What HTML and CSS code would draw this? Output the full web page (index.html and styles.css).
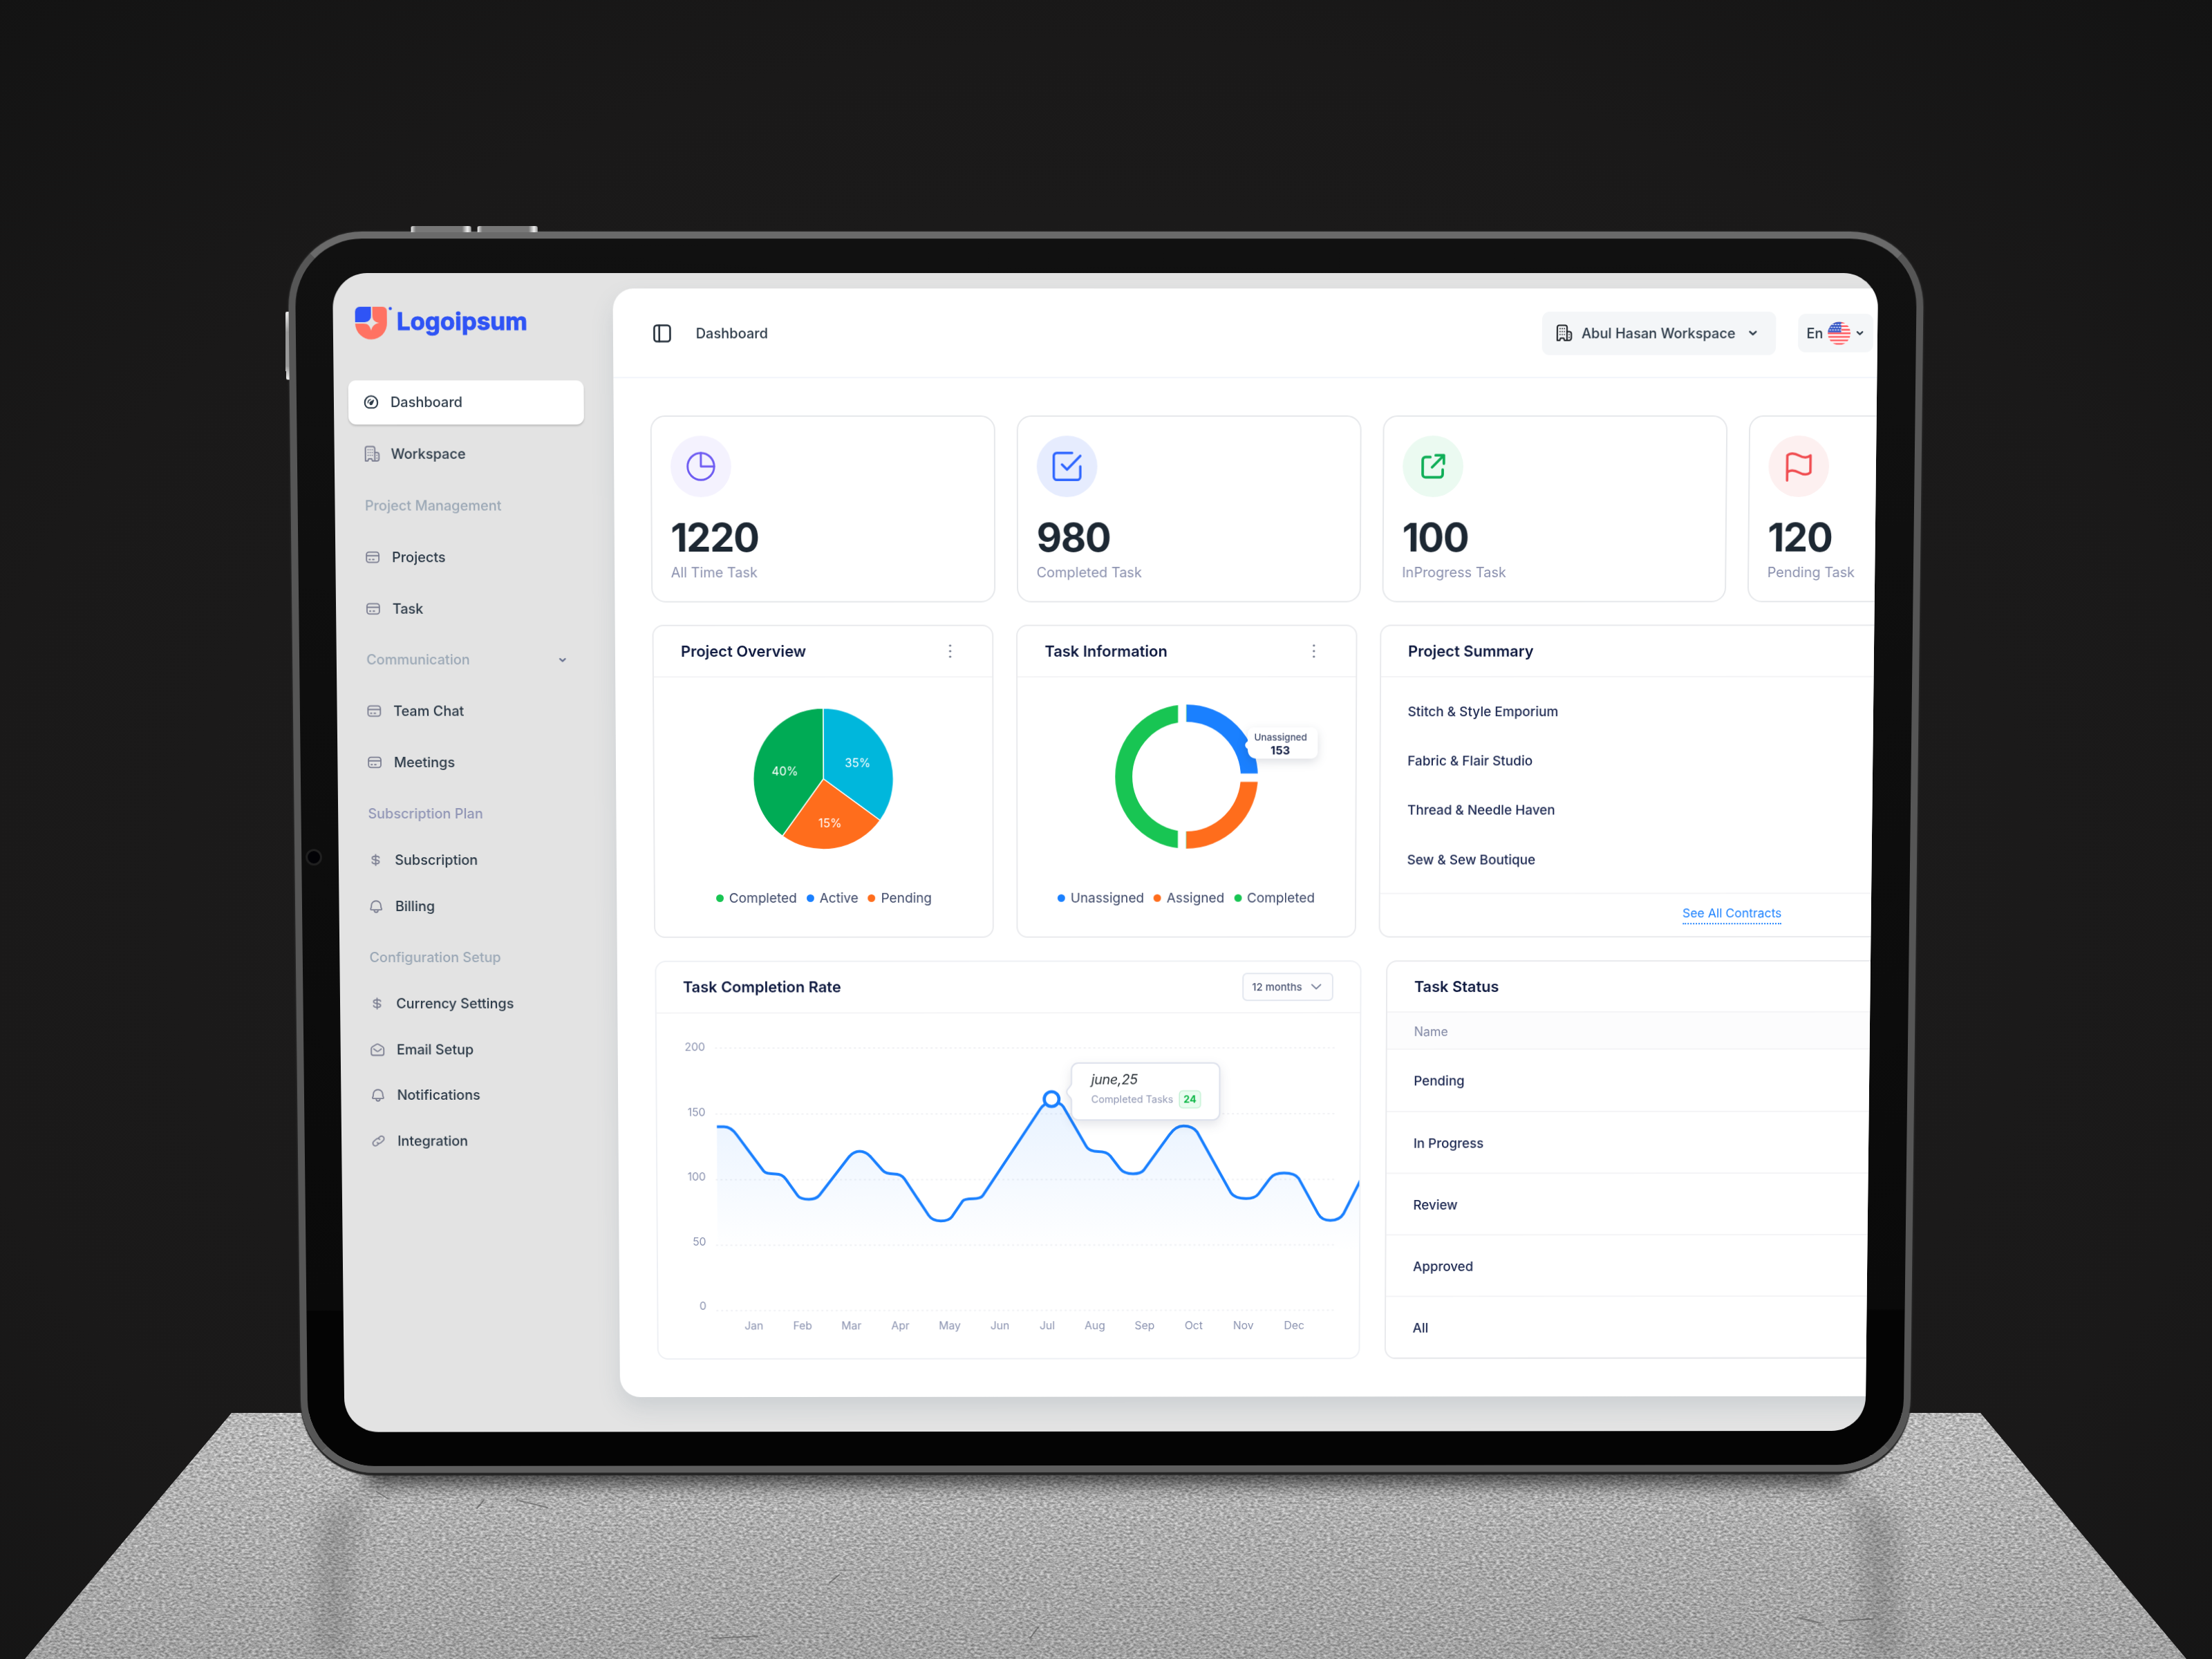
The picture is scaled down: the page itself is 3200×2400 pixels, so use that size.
FILE: index.html
```html
<!DOCTYPE html>
<html lang="en">

<head>
    <meta charset="UTF-8">
    <meta name="viewport" content="width=device-width, initial-scale=1.0">
    <title>Dashboard</title>
    <link rel="stylesheet" href="styles.css">
</head>

<body>
    <!-- icon set -->
    <svg class="icon-set" width="0" height="0">
        <symbol id="i-gauge" viewBox="0 0 24 24">
            <path d="M8 21h8c3.600-.7 6-4.300 6-8.500a10 10 0 0 0-20 0C2 16.700 4.400 20.300 8 21z" stroke-width="2.300" />
            <path d="M16 9l-2.300 5.500a2 2 0 1 1-2.600-2.600z" fill="currentColor" stroke-width="1.600" />
            <path d="M7 13a5 5 0 0 1 4-5" stroke-width="1.600" />
        </symbol>
        <symbol id="i-building" viewBox="0 0 24 24">
            <path d="M15.500 22H18.500a3 3 0 0 0 3-3v-6a3 3 0 0 0-3-3h-3" />
            <path d="M15.500 22V4a2.500 2.500 0 0 0-2.500-2.500H4.500A2.500 2.500 0 0 0 2 4v18h3.500l1-3h4.500l1 3z" />
            <path d="M5.800 6h0M8.800 6h0M11.800 6h0M5.800 10h0M8.800 10h0M11.800 10h0M5.800 14h0M8.800 14h0M11.800 14h0M18.500 14h0M18.500 18h0" stroke-width="1.800" />
        </symbol>
        <symbol id="i-card" viewBox="0 0 24 24">
            <rect x="2.200" y="4" width="19.600" height="16" rx="4" />
            <path d="M2.500 9.500h19M6.500 15.500h1.500M12 15.500h2" />
        </symbol>
        <symbol id="i-dollar" viewBox="0 0 24 24">
            <path d="M12 3.500v17M17.500 8.500C17.500 6.800 15 6 12 6S6.500 6.900 6.500 9s2.300 2.700 5.500 3 5.500 1 5.500 3-2.300 3-5.500 3-5.500-1-5.500-2.700" />
        </symbol>
        <symbol id="i-bell" viewBox="0 0 24 24">
            <path d="M4.500 17.500C3 17.500 3 16.500 3.500 15.500 4.500 14 4.500 13 4.500 11a7.500 7.500 0 0 1 15 0c0 2 0 3 1 4.500.5 1 .5 2-1 2z" />
            <path d="M9 18.500a3 3 0 0 0 6 0" />
        </symbol>
        <symbol id="i-mail" viewBox="0 0 24 24">
            <path d="M2 10.500C2 9 3 8 4 7.300L10.500 3.500a3 3 0 0 1 3 0L20 7.300c1 .7 2 1.700 2 3.200V18a3 3 0 0 1-3 3H5a3 3 0 0 1-3-3z" />
            <path d="M6 11l4.500 3.300a2.500 2.500 0 0 0 3 0L18 11" />
        </symbol>
        <symbol id="i-link" viewBox="0 0 24 24">
            <path d="M10 14.500a4 4 0 0 0 5.600.4l4-3.600a4 4 0 0 0-5.300-6l-2.500 2.200" />
            <path d="M14 9.500a4 4 0 0 0-5.600-.4l-4 3.600a4 4 0 0 0 5.300 6l2.500-2.200" />
        </symbol>
        <symbol id="i-chevron" viewBox="0 0 24 24">
            <path d="M5 9l7 6.500L19 9" />
        </symbol>
    </svg>

    <div class="scene">
        <svg class="backdrop" viewBox="0 0 3200 2400">
            <defs>
                <radialGradient id="wall" cx="0.5" cy="0.55" r="0.75">
                    <stop offset="0" stop-color="#1f1e1e" />
                    <stop offset="0.7" stop-color="#1a1919" />
                    <stop offset="1" stop-color="#131313" />
                </radialGradient>
                <filter id="grain" x="0" y="0" width="1" height="1" color-interpolation-filters="sRGB">
                    <feTurbulence type="fractalNoise" baseFrequency="0.2 0.34" numOctaves="2" seed="7" />
                    <feColorMatrix values="0.6 0 0 0 0.425  0.6 0 0 0 0.425  0.6 0 0 0 0.425  0 0 0 0 1" />
                </filter>
                <filter id="soft" x="-20%" y="-200%" width="140%" height="500%">
                    <feGaussianBlur stdDeviation="13" />
                </filter>
                <filter id="softer" x="-200%" y="-20%" width="500%" height="140%">
                    <feGaussianBlur stdDeviation="20" />
                </filter>
                <linearGradient id="falloff" x1="0" y1="0" x2="0" y2="1">
                    <stop offset="0" stop-color="#000" stop-opacity="0" />
                    <stop offset="1" stop-color="#000" stop-opacity="0.13" />
                </linearGradient>
                <clipPath id="slab">
                    <path d="M335 2044H2865L3163 2400H36z" />
                </clipPath>
            </defs>
            <rect width="3200" height="2400" fill="url(#wall)" />
            <g clip-path="url(#slab)">
                <rect y="2040" width="3200" height="360" filter="url(#grain)" />
                <rect y="2040" width="3200" height="360" fill="url(#falloff)" />
                <rect x="530" y="2105" width="2140" height="42" fill="#000" opacity="0.65" filter="url(#soft)" />
                <path d="M530 2150L470 2200V2400H490L500 2220z" fill="#444" opacity="0.38" filter="url(#softer)" />
                <path d="M2670 2150L2735 2200V2400H2710L2700 2220z" fill="#444" opacity="0.38" filter="url(#softer)" />
                <path d="M748 2170l44 11M690 2182l10-12M545 2158l16 10M1200 2290l14-12M1490 2370l12-16M2660 2345l50-3M2600 2340l34 8M1030 2370l66-3" stroke="#555" stroke-width="2" fill="none" opacity="0.6" />
            </g>
        </svg>

        <div class="tablet">
            <span class="side-key key-1"></span>
            <span class="side-key key-2"></span>
            <span class="side-key key-3"></span>
            <span class="camera"></span>

            <div class="screen">
                <aside class="sidebar">
                    <svg class="logo" width="240" height="60" viewBox="0 0 240 60">
                        <path d="M0 9a7 7 0 0 1 7-7h16v12a9 9 0 0 1-9 10H0z" fill="#2f54f5" />
                        <path d="M25 2h15a6 6 0 0 1 6 6v17a23 23 0 0 1-46 1h12c7 0 9 3 11 10 2-7 5-9.500 12-11-7-1.500-10-4-10-11z" fill="#ff7262" />
                        <circle cx="51" cy="4.500" r="2.300" fill="#2f54f5" />
                        <text x="60" y="35" textLength="189" lengthAdjust="spacingAndGlyphs">Logoipsum</text>
                    </svg>

                    <nav class="nav">
                        <a class="nav-item active"><svg><use href="#i-gauge" /></svg>Dashboard</a>
                        <a class="nav-item"><svg class="big"><use href="#i-building" /></svg>Workspace</a>
                        <div class="nav-title">Project Management</div>
                        <a class="nav-item"><svg><use href="#i-card" /></svg>Projects</a>
                        <a class="nav-item"><svg><use href="#i-card" /></svg>Task</a>
                        <div class="nav-title">Communication<svg class="arrow"><use href="#i-chevron" /></svg></div>
                        <a class="nav-item"><svg><use href="#i-card" /></svg>Team Chat</a>
                        <a class="nav-item"><svg><use href="#i-card" /></svg>Meetings</a>
                        <div class="nav-group">
                            <div class="nav-title violet">Subscription Plan</div>
                            <a class="nav-item"><svg><use href="#i-dollar" /></svg>Subscription</a>
                            <a class="nav-item"><svg><use href="#i-bell" /></svg>Billing</a>
                        </div>
                        <div class="nav-group">
                            <div class="nav-title">Configuration Setup</div>
                            <a class="nav-item"><svg><use href="#i-dollar" /></svg>Currency Settings</a>
                            <a class="nav-item"><svg><use href="#i-mail" /></svg>Email Setup</a>
                            <a class="nav-item"><svg><use href="#i-bell" /></svg>Notifications</a>
                            <a class="nav-item"><svg><use href="#i-link" /></svg>Integration</a>
                        </div>
                    </nav>
                </aside>

                <main class="main">
                    <header class="topbar">
                        <svg class="toggle" viewBox="0 0 26 26">
                            <rect x="1.500" y="1.500" width="23" height="23" rx="4" />
                            <path d="M8.800 1.500v23" />
                        </svg>
                        <span class="page-name">Dashboard</span>
                        <button class="workspace">
                            <svg class="ws-icon"><use href="#i-building" /></svg>
                            <span>Abul Hasan Workspace</span>
                            <svg class="arrow"><use href="#i-chevron" /></svg>
                        </button>
                        <button class="lang">
                            <span>En</span>
                            <svg class="flag" viewBox="0 0 34 34">
                                <clipPath id="round"><circle cx="17" cy="17" r="17" /></clipPath>
                                <g clip-path="url(#round)">
                                    <rect width="34" height="34" fill="#fff" />
                                    <path d="M0 1.300h34M0 6.500h34M0 11.700h34M0 16.900h34M0 22.100h34M0 27.300h34M0 32.500h34" stroke="#ff5a5f" stroke-width="2.700" />
                                    <rect width="20" height="15.500" fill="#3a5bc7" />
                                    <path d="M3 4h17M1 8h19M3 12h17" stroke="#fff" stroke-width="1.300" stroke-dasharray="1.500 2.500" />
                                </g>
                            </svg>
                            <svg class="arrow"><use href="#i-chevron" /></svg>
                        </button>
                    </header>

                    <div class="content">
                        <section class="stats">
                            <div class="stat">
                                <div class="stat-icon purple">
                                    <svg viewBox="0 0 24 24"><circle cx="12" cy="12" r="10.500" /><path d="M12 1.500V12h10.500" /></svg>
                                </div>
                                <div class="stat-value">1220</div>
                                <div class="stat-label">All Time Task</div>
                            </div>
                            <div class="stat">
                                <div class="stat-icon blue">
                                    <svg viewBox="0 0 24 24"><path d="M16 1.500H4A2.500 2.500 0 0 0 1.500 4v16A2.500 2.500 0 0 0 4 22.500h16a2.500 2.500 0 0 0 2.500-2.500v-8" /><path d="M8 10.500l4 4L22.500 3.800" /></svg>
                                </div>
                                <div class="stat-value">980</div>
                                <div class="stat-label">Completed Task</div>
                            </div>
                            <div class="stat">
                                <div class="stat-icon green">
                                    <svg viewBox="0 0 24 24"><path d="M10 4.500H6A2.500 2.500 0 0 0 3.500 7v12A2.500 2.500 0 0 0 6 21.500h12a2.500 2.500 0 0 0 2.500-2.500v-4" /><path d="M14.500 3H21.500V10M21.500 3L11.500 13" /></svg>
                                </div>
                                <div class="stat-value">100</div>
                                <div class="stat-label">InProgress Task</div>
                            </div>
                            <div class="stat">
                                <div class="stat-icon red">
                                    <svg viewBox="0 0 24 24"><path d="M2.800 23V3.500c3-2.600 6-1.700 9.200 0s6.200 2.500 9.200 0v13.300c-3 2.600-6 1.700-9.200 0s-6.200-2.600-9.200 0" /></svg>
                                </div>
                                <div class="stat-value">120</div>
                                <div class="stat-label">Pending Task</div>
                            </div>
                        </section>

                        <section class="row-middle">
                            <div class="card overview">
                                <div class="card-head"><h3>Project Overview</h3><svg class="dots" viewBox="0 0 6 20"><path d="M3 2h0M3 10h0M3 18h0" /></svg></div>
                                <svg class="round-chart" viewBox="-110 -110 220 220">
                                    <g stroke="#fff" stroke-width="1.500" stroke-linejoin="round">
                                        <path d="M0 0V-102A102 102 0 0 1 82.500 60z" fill="#00b7dc" />
                                        <path d="M0 0L82.500 60A102 102 0 0 1-60 82.500z" fill="#ff6d1c" />
                                        <path d="M0 0L-60 82.500A102 102 0 0 1 0-102z" fill="#00ab55" />
                                    </g>
                                    <g class="pie-label">
                                        <text x="50" y="-17">35%</text>
                                        <text x="9.500" y="70">15%</text>
                                        <text x="-56" y="-5">40%</text>
                                    </g>
                                </svg>
                                <div class="legend">
                                    <span><i class="c-green"></i>Completed</span>
                                    <span><i class="c-blue"></i>Active</span>
                                    <span><i class="c-orange"></i>Pending</span>
                                </div>
                            </div>

                            <div class="card information">
                                <div class="card-head"><h3>Task Information</h3><svg class="dots" viewBox="0 0 6 20"><path d="M3 2h0M3 10h0M3 18h0" /></svg></div>
                                <svg class="round-chart" viewBox="-110 -107 220 220">
                                    <g fill="none" stroke-width="25" stroke-linecap="butt">
                                        <path d="M0-91.500A91.500 91.500 0 0 1 91.500 0" stroke="#1a80ff" />
                                        <path d="M91.500 0A91.500 91.500 0 0 1 0 91.500" stroke="#ff6d1c" />
                                        <path d="M0 91.500A91.500 91.500 0 0 1 0-91.500" stroke="#18c553" />
                                    </g>
                                    <path d="M-12.500-108h12v216h-12zM0-4.500h108v12H0z" fill="#fff" />
                                    <path class="callout" d="M97.500-71H182a9 9 0 0 1 9 9v27a9 9 0 0 1-9 9H103c-10 0-14-6-14-14-5-3-5-8 0-11v-11a9 9 0 0 1 8.500-9z" />
                                    <g class="callout-text">
                                        <text x="137" y="-52.500">Unassigned</text>
                                        <text class="strong" x="136.500" y="-32.500">153</text>
                                    </g>
                                </svg>
                                <div class="legend">
                                    <span><i class="c-blue"></i>Unassigned</span>
                                    <span><i class="c-orange"></i>Assigned</span>
                                    <span><i class="c-green"></i>Completed</span>
                                </div>
                            </div>

                            <div class="card summary">
                                <div class="card-head"><h3>Project Summary</h3></div>
                                <ul>
                                    <li>Stitch &amp; Style Emporium</li>
                                    <li>Fabric &amp; Flair Studio</li>
                                    <li>Thread &amp; Needle Haven</li>
                                    <li>Sew &amp; Sew Boutique</li>
                                </ul>
                                <div class="card-foot"><a>See All Contracts</a></div>
                            </div>
                        </section>

                        <section class="row-bottom">
                            <div class="card rate">
                                <div class="card-head">
                                    <h3>Task Completion Rate</h3>
                                    <button class="period">12 months<svg><use href="#i-chevron" /></svg></button>
                                </div>
                                <svg class="line-chart" viewBox="0.3 1.5 1030 505">
                                    <defs>
                                        <linearGradient id="area" gradientUnits="userSpaceOnUse" x1="0" y1="125" x2="0" y2="350">
                                            <stop offset="0" stop-color="#1a80ff" stop-opacity="0.1" />
                                            <stop offset="1" stop-color="#1a80ff" stop-opacity="0" />
                                        </linearGradient>
                                    </defs>
                                    <path class="grid-line" d="M85.500 51.600H992M85.500 147.400H992M85.500 243.200H992M85.500 339H992M85.500 434.800H992" />
                                    <g class="y-axis">
                                        <text x="71" y="56">200</text>
                                        <text x="71" y="150.500">150</text>
                                        <text x="71" y="245">100</text>
                                        <text x="71" y="339.500">50</text>
                                        <text x="71" y="434">0</text>
                                    </g>
                                    <g class="x-axis">
                                        <text x="140.500" y="463">Jan</text>
                                        <text x="212" y="463">Feb</text>
                                        <text x="283.500" y="463">Mar</text>
                                        <text x="355.500" y="463">Apr</text>
                                        <text x="428" y="463">May</text>
                                        <text x="501.500" y="463">Jun</text>
                                        <text x="571" y="463">Jul</text>
                                        <text x="641" y="463">Aug</text>
                                        <text x="714" y="463">Sep</text>
                                        <text x="786" y="463">Oct</text>
                                        <text x="859" y="463">Nov</text>
                                        <text x="933.500" y="463">Dec</text>
                                    </g>
                                    <path fill="url(#area)" d="M87.600 166.100H98Q108 166.100 116.800 178.100L155.800 230.800Q159 234.900 173.600 234.900Q182.800 234.900 187.800 241.900L205.500 266.700Q209.300 272 221.800 272Q232.700 272 237.500 265.800L280 211Q287 202 296.400 202Q306 202 313.400 211L329.800 229.600Q334.500 234.900 346.100 234.900Q357 234.900 361.700 241.900L397.200 295.500Q402.600 303.700 415 303.700Q427 303.700 431.300 297.600L446.900 274.900Q449.400 271.200 462.500 271.200Q473.700 271.200 476.700 266.700L560.500 141Q567.400 130.700 577.500 130.700Q591 130.700 594.600 136.900L628 194.600Q632.500 202.400 645.700 202.400Q658.400 202.400 663.500 209L677.700 227.500Q683.400 234.900 696.800 234.900Q708 234.900 712.500 229.600L750 178.100Q759 165.300 770.500 165.300Q784 165.300 790.500 174L840 262.500Q845.500 271.200 862.500 271.200Q875.500 271.200 880.500 264.600L897.500 241.900Q903 234.100 918 234.100Q934 234.100 939.500 241.900L968 293.400Q973.500 303.300 986 303.300Q999.500 303.300 1005.500 293.400L1036 233V400H87.600z" />
                                    <path class="line" d="M87.600 166.100H98Q108 166.100 116.800 178.100L155.800 230.800Q159 234.900 173.600 234.900Q182.800 234.900 187.800 241.900L205.500 266.700Q209.300 272 221.800 272Q232.700 272 237.500 265.800L280 211Q287 202 296.400 202Q306 202 313.400 211L329.800 229.600Q334.500 234.900 346.100 234.900Q357 234.900 361.700 241.900L397.200 295.500Q402.600 303.700 415 303.700Q427 303.700 431.300 297.600L446.900 274.900Q449.400 271.200 462.500 271.200Q473.700 271.200 476.700 266.700L560.500 141Q567.400 130.700 577.500 130.700Q591 130.700 594.600 136.900L628 194.600Q632.500 202.400 645.700 202.400Q658.400 202.400 663.500 209L677.700 227.500Q683.400 234.900 696.800 234.900Q708 234.900 712.500 229.600L750 178.100Q759 165.300 770.500 165.300Q784 165.300 790.500 174L840 262.500Q845.500 271.200 862.500 271.200Q875.500 271.200 880.500 264.600L897.500 241.900Q903 234.100 918 234.100Q934 234.100 939.500 241.900L968 293.400Q973.500 303.300 986 303.300Q999.500 303.300 1005.500 293.400L1036 233" />
                                    <circle cx="577.500" cy="126" r="10.800" fill="#fff" stroke="#1a80ff" stroke-width="4.600" />
                                    <path class="tip" d="M616.600 73.500H813.500a10 10 0 0 1 10 10v63a10 10 0 0 1-10 10H616.600a10 10 0 0 1-10-10V128c0-5-7-7-7-12.500s7-7.500 7-12.500V83.500a10 10 0 0 1 10-10z" />
                                    <text class="tip-date" x="635.500" y="104.500">june,25</text>
                                    <text class="tip-label" x="635.500" y="132">Completed Tasks</text>
                                    <rect class="tip-badge" x="764.500" y="114" width="31" height="25" rx="5" />
                                    <text class="tip-count" x="780" y="132">24</text>
                                </svg>
                            </div>

                            <div class="card status">
                                <div class="card-head"><h3>Task Status</h3></div>
                                <div class="table-head">Name</div>
                                <div class="table-row">Pending</div>
                                <div class="table-row">In Progress</div>
                                <div class="table-row">Review</div>
                                <div class="table-row">Approved</div>
                                <div class="table-row">All</div>
                            </div>
                        </section>
                    </div>
                </main>
            </div>
        </div>
    </div>
</body>

</html>
```
FILE: styles.css
```css
* {
    box-sizing: border-box;
}

body {
    margin: 0;
    width: 3200px;
    height: 2400px;
    overflow: hidden;
    background: #1a1919;
    font-family: Inter, "Liberation Sans", sans-serif;
    font-size: 20px;
    color: #2b3947;
}

.icon-set {
    position: absolute;
}

svg {
    flex: none;
    overflow: visible;
    fill: none;
    stroke-linecap: round;
    stroke-linejoin: round;
}

text {
    stroke: none;
}

button {
    font: inherit;
    color: inherit;
    border: none;
}

h3 {
    margin: 0;
    font-size: 22px;
    font-weight: 600;
    color: #0f1a40;
}

.scene {
    position: relative;
    width: 3200px;
    height: 2400px;
    overflow: hidden;
}

.backdrop {
    position: absolute;
    top: 0;
    left: 0;
    width: 3200px;
    height: 2400px;
}

/* tablet, tilted slightly backwards */
.tablet {
    position: absolute;
    left: 417px;
    top: 335.5px;
    width: 2365.5px;
    height: 1794.5px;
    padding: 48.5px 55.5px 50px 54px;
    border: 10px solid;
    border-color: #6a6a6a #565656 #5e5e5e #565656;
    border-radius: 107px;
    background: linear-gradient(#111, #0a0a0a 87.1%, #040404 87.2%) padding-box;
    box-shadow: 0 0 2px 1px #2a2a2a, 0 4px 1px #222;
    transform-origin: 64px 58.5px;
    transform: matrix3d(1.0010315, 0, 0, 0.0000004613,
                        0.0106125, 1.016796, 0, 0.0000097685,
                        0, 0, 1, 0,
                        0, 0, 0, 1);
}

.side-key {
    position: absolute;
    height: 9px;
    width: 87px;
    top: -18px;
    border-radius: 3px 3px 0 0;
    background: linear-gradient(90deg, #eee, #777 8%, #777 85%, #eee 94%, #999);
}

.key-1 {
    left: 168px;
}

.key-2 {
    left: 264px;
}

.key-3 {
    left: -15px;
    top: 104px;
    width: 5px;
    height: 97px;
    border-radius: 3px 0 0 3px;
    background: linear-gradient(#eee, #999 30%, #999 80%, #eee);
}

.camera {
    position: absolute;
    left: 6px;
    top: 875px;
    width: 24px;
    height: 24px;
    border: 3px solid #202020;
    border-radius: 50%;
    background: #020206;
}

.screen {
    display: flex;
    width: 2236px;
    height: 1676px;
    overflow: hidden;
    border-radius: 50px;
    background: #e3e3e3;
}

/* sidebar */
.sidebar {
    flex: none;
    width: 404.7px;
    padding: 46px 43px 0 21.4px;
}

.logo {
    display: block;
    margin-left: 10.7px;
}

.logo text {
    font-size: 34px;
    font-weight: 700;
    fill: #2f54f5;
    stroke: #2f54f5;
    stroke-width: 1px;
}

.nav {
    display: flex;
    flex-direction: column;
    gap: 17.9px;
    margin-top: 50.5px;
}

.nav-group {
    display: flex;
    flex-direction: column;
    gap: 10.9px;
}

.nav-item,
.nav-title {
    display: flex;
    align-items: center;
    height: 56px;
    padding: 0 22px;
    font-weight: 500;
}

.nav-item {
    gap: 16.5px;
}

.nav-item svg {
    width: 22px;
    height: 22px;
    stroke: #7c7f92;
    stroke-width: 2px;
}

.nav-item .big {
    width: 24px;
    height: 24px;
    margin-right: -2px;
}

.nav-item.active {
    height: 63px;
    margin: -3.5px 0;
    border-radius: 11px;
    background: #fff;
    box-shadow: 0 2px 3px rgba(0, 0, 0, 0.18);
}

.nav-item.active svg {
    color: #2b3947;
    stroke: #2b3947;
}

.nav-title {
    justify-content: space-between;
    color: #9ba8b6;
}

.nav-title.violet {
    color: #9196b6;
}

.arrow {
    width: 15px;
    height: 15px;
    stroke: #2b3947;
    stroke-width: 4px;
}

.nav-title .arrow {
    width: 13px;
    height: 13px;
    margin-right: 5px;
    stroke: #66708f;
}

/* main panel */
.main {
    flex: none;
    width: 2300px;
    height: 1603px;
    margin-top: 22.4px;
    border-radius: 30px;
    background: #fff;
    box-shadow: 0 16px 32px rgba(100, 120, 140, 0.18);
}

.topbar {
    display: flex;
    align-items: center;
    width: 1831px;
    height: 128px;
    padding: 2px 5.5px 0 58px;
    border-bottom: 2px solid #f2f5fb;
}

.toggle {
    width: 26px;
    height: 26px;
    stroke: #222d38;
    stroke-width: 2.6px;
}

.page-name {
    margin: 0 auto 0 36px;
    font-weight: 500;
}

.workspace,
.lang {
    display: flex;
    align-items: center;
    border-radius: 11px;
    background: #f4f6f8;
    font-weight: 500;
}

.workspace {
    width: 339px;
    height: 62px;
    margin-right: 32px;
    padding: 0 26px 0 20px;
}

.workspace span {
    margin: 0 auto 0 12px;
}

.ws-icon {
    width: 25px;
    height: 25px;
    stroke: #1c2025;
    stroke-width: 2px;
}

.lang {
    width: 109px;
    height: 55px;
    padding: 0 12px;
    gap: 7px;
}

.lang .arrow {
    width: 13px;
}

.flag {
    width: 33px;
    height: 34px;
}

.content {
    padding: 53.5px 0 0 53px;
}

.stats {
    display: grid;
    grid-template-columns: repeat(4, 500.5px);
    gap: 30.5px;
}

.stat {
    height: 267.5px;
    padding: 26.5px 27px;
    border: 2px solid #e6e8eb;
    border-radius: 21px;
}

.stat-icon {
    display: flex;
    align-items: center;
    justify-content: center;
    width: 88px;
    height: 88px;
    border-radius: 50%;
    stroke-width: 1.9px;
}

.stat-icon svg {
    width: 44px;
    height: 44px;
}

.purple {
    background: #f4f2fe;
    stroke: #6e5cf2;
    stroke-width: 1.6px;
}

.blue {
    background: #e6ecfe;
    stroke: #2f66ff;
}

.green {
    background: #ebfaf1;
    stroke: #0fae57;
    stroke-width: 2.2px;
}

.stat-icon.green svg {
    width: 41px;
    height: 41px;
}

.red {
    background: #fdf0f0;
    stroke: #f04c50;
}

.stat-value {
    margin-top: 27px;
    font-size: 56.5px;
    line-height: 62px;
    font-weight: 700;
    letter-spacing: -1.5px;
    color: #1d2833;
}

.stat-label {
    margin-top: 6px;
    font-size: 20px;
    line-height: 26px;
    color: #8a90ae;
}

.card {
    flex: none;
    overflow: hidden;
    border: 2px solid #e9eaed;
    border-radius: 16px;
    background: #fff;
}

.card-head {
    display: flex;
    align-items: center;
    justify-content: space-between;
    height: 74px;
    padding: 0 39px;
    border-bottom: 2px solid #f4f4f6;
}

.dots {
    width: 6px;
    height: 20px;
    margin-right: 19px;
    stroke: #6d7488;
    stroke-width: 3.2px;
}

.row-middle {
    display: flex;
    height: 451.5px;
    margin: 32.5px 0 0 1.8px;
}

.overview,
.information {
    display: flex;
    flex-direction: column;
    width: 495.5px;
    margin-right: 33.5px;
}

.information {
    margin-right: 33px;
}

.round-chart {
    width: 220px;
    height: 220px;
    margin: 36px auto 0;
}

.pie-label text {
    font-size: 17px;
    fill: #fff;
    text-anchor: middle;
}

.callout {
    fill: #fff;
    filter: drop-shadow(0 5px 7px rgba(30, 40, 70, 0.15));
}

.callout-text text {
    font-size: 13.6px;
    font-weight: 500;
    fill: #3d4868;
    text-anchor: middle;
}

.callout-text .strong {
    font-size: 16.5px;
    font-weight: 700;
    fill: #0f1a40;
}

.legend {
    display: flex;
    justify-content: center;
    gap: 14px;
    margin-top: 47px;
    font-size: 19.2px;
    line-height: 30px;
    color: #3d4868;
}

.information .legend {
    padding-right: 1px;
}

.legend span {
    display: flex;
    align-items: center;
    gap: 8px;
}

.legend i {
    width: 11px;
    height: 11px;
    border-radius: 50%;
}

.c-green {
    background: #18c553;
}

.c-blue {
    background: #1a80ff;
}

.c-orange {
    background: #ff6d1c;
}

.summary {
    width: 1031px;
}

.summary ul {
    height: 313px;
    margin: 0;
    padding: 13.5px 39px;
    list-style: none;
    border-bottom: 2px solid #f4f4f6;
}

.summary li {
    font-size: 19.1px;
    line-height: 71.2px;
    font-weight: 500;
    color: #1b2750;
}

.card-foot {
    display: flex;
    justify-content: center;
    padding: 15px 0 0 1px;
    font-size: 17.8px;
}

.card-foot a {
    line-height: 26px;
    padding-bottom: 1px;
    border-bottom: 2px dotted #1a80ff;
    color: #1a80ff;
}

.row-bottom {
    display: flex;
    height: 582px;
    margin: 33px 0 0 2px;
}

.rate {
    width: 1032.5px;
    margin-right: 36px;
    border-color: #eef0f4;
}

.rate .card-head {
    height: 75px;
}

.period {
    display: flex;
    align-items: center;
    justify-content: space-between;
    width: 133px;
    height: 41px;
    padding: 0 12px;
    border: 2px solid #e3e7ef;
    border-radius: 7px;
    background: #fdfdfe;
    font-size: 15px;
    font-weight: 500;
    color: #4b5573;
}

.period svg {
    width: 22px;
    height: 22px;
    stroke: #7b849c;
    stroke-width: 2px;
}

.line-chart {
    display: block;
    width: 1030px;
    height: 505px;
}

.grid-line {
    stroke: #f0f1f4;
    stroke-width: 2px;
    stroke-dasharray: 3 4;
    stroke-linecap: butt;
}

.y-axis text,
.x-axis text {
    font-size: 16px;
    fill: #8b93b0;
    text-anchor: end;
}

.x-axis text {
    text-anchor: middle;
}

.line {
    stroke: #1a80ff;
    stroke-width: 4px;
    stroke-linecap: butt;
}

.tip {
    fill: #fff;
    stroke: #dde1ec;
    stroke-width: 2px;
    filter: drop-shadow(0 6px 8px rgba(30, 40, 70, 0.12));
}

.tip-date {
    font-size: 20px;
    font-style: italic;
    letter-spacing: -0.3px;
    fill: #2b3238;
}

.tip-label {
    font-size: 14.7px;
    fill: #9097b3;
}

.tip-badge {
    fill: #e9fcf0;
    stroke: #c5f2d5;
    stroke-width: 1.5px;
}

.tip-count {
    font-size: 14.5px;
    font-weight: 700;
    fill: #12b84a;
    text-anchor: middle;
}

.status {
    width: 1030px;
}

.table-head,
.table-row {
    padding-left: 39px;
    border-bottom: 2px solid #f4f4f6;
}

.table-head {
    height: 54.5px;
    line-height: 56px;
    font-size: 18px;
    background: #fcfcfd;
    color: #7f86a3;
}

.table-row {
    height: 90.2px;
    line-height: 92.5px;
    font-size: 19px;
    font-weight: 500;
    color: #1b2750;
}
```
